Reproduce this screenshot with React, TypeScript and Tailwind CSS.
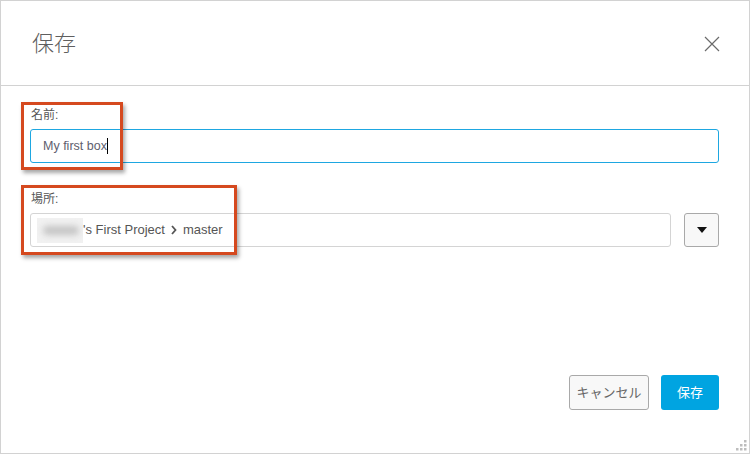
const font = {
  fontFamily: '"Liberation Sans", "Noto Sans CJK JP", sans-serif',
};

function CloseIcon() {
  return (
    <svg width="16" height="16" viewBox="0 0 16 16" className="text-[#6b6b6b]">
      <path d="M1 1L15 15M15 1L1 15" stroke="currentColor" strokeWidth="1.2" fill="none" />
    </svg>
  );
}

function ResizeGrip() {
  const dots = [
    [8, 0],
    [4, 4],
    [8, 4],
    [0, 8],
    [4, 8],
    [8, 8],
  ];
  return (
    <svg width="11" height="11" viewBox="0 0 11 11" className="absolute right-[2px] bottom-[2px]">
      {dots.map(([x, y]) => (
        <rect key={`${x}-${y}`} x={x} y={y} width="2.5" height="2.5" fill="#bdbdbd" />
      ))}
    </svg>
  );
}

function Highlight({ className }: { className: string }) {
  return (
    <div
      className={`pointer-events-none absolute border-[3px] border-[#d5491f] shadow-[2px_3px_4px_rgba(0,0,0,0.35)] ${className}`}
    />
  );
}

// blurred-out user name, drawn as soft grey smudges
function Redacted() {
  return (
    <span className="relative flex h-[25px] w-[46px] shrink-0 items-center overflow-hidden bg-[#f1f1f1]">
      <span className="ml-[6px] h-[9px] w-[36px] rounded-full bg-[#c4c4c4] blur-[3px]" />
    </span>
  );
}

export default function App() {
  return (
    <div
      style={font}
      className="relative flex h-[454px] w-[750px] flex-col border border-[#d2d2d2] bg-white"
    >
      <div className="flex h-[85px] shrink-0 items-center justify-between border-b border-[#d2d2d2] pt-[2px] pr-[29px] pl-[31px]">
        <h1 className="text-[22px] leading-none font-light text-[#5f5f5f]">保存</h1>
        <CloseIcon />
      </div>

      <div className="flex flex-1 flex-col pt-[21px] pr-[30px] pl-[29px]">
        <label className="block h-4 pl-[1px] text-[12px] leading-4 text-[#555]">名前:</label>
        <div className="mt-[6px] flex h-[34px] items-center rounded-[3px] border border-[#1ea7e1] pl-[12px] text-[12.5px] text-[#5e5e6e]">
          My first box
          <span className="inline-block h-[16px] w-[1px] bg-black" />
        </div>

        <label className="mt-[28px] block h-4 pl-[1px] text-[12px] leading-4 text-[#555]">場所:</label>
        <div className="mt-[6px] flex items-center gap-[13px]">
          <div className="flex h-[34px] flex-1 items-center rounded-[3px] border border-[#d4d4d4] pl-[6px] text-[13px] text-[#555]">
            <Redacted />
            <span>'s First Project</span>
            <svg width="6" height="10" viewBox="0 0 6 10" className="mx-[6px]">
              <path d="M1 1L4.5 5L1 9" stroke="#555" strokeWidth="1.8" fill="none" />
            </svg>
            <span>master</span>
          </div>
          <button className="flex h-[34px] w-[35px] items-center justify-center rounded-[3px] border border-[#a9a9a9] bg-[#f8f8f8]">
            <svg width="10" height="6" viewBox="0 0 10 6">
              <path d="M0 0H10L5 6Z" fill="#111" />
            </svg>
          </button>
        </div>

        <div className="mt-auto mb-[43px] flex justify-end gap-[12px]">
          <button className="h-[35px] w-[80px] rounded-[3px] border border-[#a9a9a9] bg-[#f8f8f8] text-[13px] text-[#666]">
            キャンセル
          </button>
          <button className="h-[35px] w-[58px] rounded-[3px] bg-[#00a4e1] text-[13px] text-white">
            保存
          </button>
        </div>
      </div>

      <Highlight className="top-[101px] left-[20px] h-[68px] w-[102px]" />
      <Highlight className="top-[184px] left-[20px] h-[70px] w-[216px]" />
      <ResizeGrip />
    </div>
  );
}
